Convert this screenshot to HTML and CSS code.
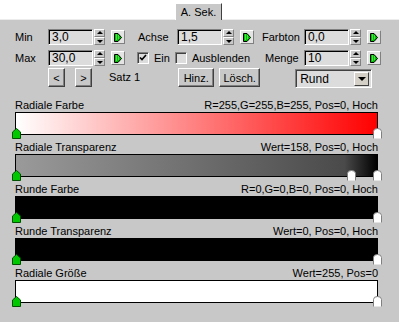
FILE: index.html
```html
<!DOCTYPE html>
<html lang="de">
<head>
    <meta charset="UTF-8">
    <title>A. Sek.</title>
    <link rel="stylesheet" href="styles.css">
</head>
<body>
    <div class="tabbar">
        <div class="tab">A. Sek.</div>
    </div>
    <div class="panel">
        <div class="row">
            <div class="grp">
                <span class="lbl w33">Min</span>
                <div class="field">3,0</div>
                <div class="spin"><b class="up"></b><b class="dn"></b></div>
                <div class="key"><svg width="8" height="9" viewBox="0 0 8 9"><polygon points="0.5,0.5 4,0.5 7.5,4.5 4,8.5 0.5,8.5" fill="#00c000" stroke="#000"/><path d="M2 2h1M4 3h1M2 4h1M4 5h1M2 6h1" stroke="#9f9" stroke-width="1"/></svg></div>
            </div>
            <div class="grp g2">
                <span class="lbl w39">Achse</span>
                <div class="field">1,5</div>
                <div class="spin"><b class="up"></b><b class="dn"></b></div>
                <div class="key"><svg width="8" height="9" viewBox="0 0 8 9"><polygon points="0.5,0.5 4,0.5 7.5,4.5 4,8.5 0.5,8.5" fill="#00c000" stroke="#000"/><path d="M2 2h1M4 3h1M2 4h1M4 5h1M2 6h1" stroke="#9f9" stroke-width="1"/></svg></div>
            </div>
            <div class="grp g3">
                <span class="lbl w42">Farbton</span>
                <div class="field">0,0</div>
                <div class="spin"><b class="up"></b><b class="dn"></b></div>
                <div class="key"><svg width="8" height="9" viewBox="0 0 8 9"><polygon points="0.5,0.5 4,0.5 7.5,4.5 4,8.5 0.5,8.5" fill="#00c000" stroke="#000"/><path d="M2 2h1M4 3h1M2 4h1M4 5h1M2 6h1" stroke="#9f9" stroke-width="1"/></svg></div>
            </div>
        </div>
        <div class="row">
            <div class="grp">
                <span class="lbl w33">Max</span>
                <div class="field">30,0</div>
                <div class="spin"><b class="up"></b><b class="dn"></b></div>
                <div class="key"><svg width="8" height="9" viewBox="0 0 8 9"><polygon points="0.5,0.5 4,0.5 7.5,4.5 4,8.5 0.5,8.5" fill="#00c000" stroke="#000"/><path d="M2 2h1M4 3h1M2 4h1M4 5h1M2 6h1" stroke="#9f9" stroke-width="1"/></svg></div>
            </div>
            <label class="check c1"><span class="box"><svg width="8" height="8" viewBox="0 0 8 8"><path d="M1 3.5l2 2 4-4.5" fill="none" stroke="#000" stroke-width="1.6"/></svg></span>Ein</label>
            <label class="check c2"><span class="box"></span>Ausblenden</label>
            <div class="grp g3">
                <span class="lbl w42 pad3">Menge</span>
                <div class="field">10</div>
                <div class="spin"><b class="up"></b><b class="dn"></b></div>
                <div class="key"><svg width="8" height="9" viewBox="0 0 8 9"><polygon points="0.5,0.5 4,0.5 7.5,4.5 4,8.5 0.5,8.5" fill="#00c000" stroke="#000"/><path d="M2 2h1M4 3h1M2 4h1M4 5h1M2 6h1" stroke="#9f9" stroke-width="1"/></svg></div>
            </div>
        </div>
        <div class="row r3">
            <button class="btn nav first">&lt;</button>
            <button class="btn nav">&gt;</button>
            <span class="satz">Satz 1</span>
            <button class="btn hinz">Hinz.</button>
            <button class="btn losch">Lösch.</button>
            <div class="combo"><span>Rund</span><i class="drop"></i></div>
        </div>

        <div class="sec first">
            <div class="head"><span>Radiale Farbe</span><span>R=255,G=255,B=255, Pos=0, Hoch</span></div>
            <div class="bar grad-red">
                <svg class="mk start" width="9" height="11" viewBox="0 0 9 11"><polygon points="0.5,10.5 0.5,4 4.5,0.5 8.5,4 8.5,10.5" fill="#00c800" stroke="#005000"/></svg>
                <svg class="mk end" width="9" height="11" viewBox="0 0 9 11"><path d="M0.5 10.5V3.5Q0.5 0.5 4.5 0.5Q8.5 0.5 8.5 3.5V10.5" fill="#fff" stroke="#808080"/></svg>
            </div>
        </div>
        <div class="sec">
            <div class="head"><span>Radiale Transparenz</span><span>Wert=158, Pos=0, Hoch</span></div>
            <div class="bar grad-gray">
                <svg class="mk start" width="9" height="11" viewBox="0 0 9 11"><polygon points="0.5,10.5 0.5,4 4.5,0.5 8.5,4 8.5,10.5" fill="#00c800" stroke="#005000"/></svg>
                <svg class="mk mid" width="9" height="11" viewBox="0 0 9 11"><path d="M0.5 10.5V3.5Q0.5 0.5 4.5 0.5Q8.5 0.5 8.5 3.5V10.5" fill="#fff" stroke="#808080"/></svg>
                <svg class="mk end" width="9" height="11" viewBox="0 0 9 11"><path d="M0.5 10.5V3.5Q0.5 0.5 4.5 0.5Q8.5 0.5 8.5 3.5V10.5" fill="#fff" stroke="#808080"/></svg>
            </div>
        </div>
        <div class="sec">
            <div class="head"><span>Runde Farbe</span><span>R=0,G=0,B=0, Pos=0, Hoch</span></div>
            <div class="bar black">
                <svg class="mk start" width="9" height="11" viewBox="0 0 9 11"><polygon points="0.5,10.5 0.5,4 4.5,0.5 8.5,4 8.5,10.5" fill="#00c800" stroke="#005000"/></svg>
                <svg class="mk end" width="9" height="11" viewBox="0 0 9 11"><path d="M0.5 10.5V3.5Q0.5 0.5 4.5 0.5Q8.5 0.5 8.5 3.5V10.5" fill="#fff" stroke="#808080"/></svg>
            </div>
        </div>
        <div class="sec">
            <div class="head"><span>Runde Transparenz</span><span>Wert=0, Pos=0, Hoch</span></div>
            <div class="bar black">
                <svg class="mk start" width="9" height="11" viewBox="0 0 9 11"><polygon points="0.5,10.5 0.5,4 4.5,0.5 8.5,4 8.5,10.5" fill="#00c800" stroke="#005000"/></svg>
                <svg class="mk end" width="9" height="11" viewBox="0 0 9 11"><path d="M0.5 10.5V3.5Q0.5 0.5 4.5 0.5Q8.5 0.5 8.5 3.5V10.5" fill="#fff" stroke="#808080"/></svg>
            </div>
        </div>
        <div class="sec">
            <div class="head"><span>Radiale Größe</span><span>Wert=255, Pos=0</span></div>
            <div class="bar plain">
                <svg class="mk start" width="9" height="11" viewBox="0 0 9 11"><polygon points="0.5,10.5 0.5,4 4.5,0.5 8.5,4 8.5,10.5" fill="#00c800" stroke="#005000"/></svg>
                <svg class="mk end" width="9" height="11" viewBox="0 0 9 11"><path d="M0.5 10.5V3.5Q0.5 0.5 4.5 0.5Q8.5 0.5 8.5 3.5V10.5" fill="#fff" stroke="#808080"/></svg>
            </div>
        </div>
    </div>
</body>
</html>
```

FILE: styles.css
```css
body {
    margin: 0;
    width: 399px;
    height: 322px;
    overflow: hidden;
    background-color: #fff;
    font-family: "Liberation Sans", Arial, sans-serif;
    font-size: 11px;
    color: #000;
}
.tabbar {
    height: 19px;
    display: flex;
    align-items: flex-end;
}
.tab {
    margin-left: 175px;
    margin-bottom: -1px;
    width: 47px;
    height: 17px;
    box-sizing: border-box;
    border: 1px solid;
    border-color: #fff #404040 transparent #fff;
    border-bottom: none;
    background-color: #c8c8c8;
    text-align: center;
    line-height: 16px;
    position: relative;
    z-index: 1;
}
.panel {
    background-color: #c8c8c8;
    border-top: 1px solid #ececec;
    height: 302px;
    padding: 9px 18px 0 15px;
}
.row {
    display: flex;
    align-items: center;
    height: 16px;
    margin-bottom: 5px;
}
.row.r3 {
    height: 20px;
    margin-top: -3px;
    margin-bottom: 0;
    align-items: flex-start;
}
.grp {
    display: flex;
    align-items: center;
}
.g2 {
    margin-left: 13px;
}
.g3 {
    margin-left: auto;
}
.lbl {
    display: inline-block;
}
.w33 { width: 33px; }
.w39 { width: 39px; }
.w42 { width: 42px; }
.pad3 { padding-left: 3px; width: 39px; }
.field {
    width: 45px;
    height: 16px;
    box-sizing: border-box;
    border: 1px solid;
    border-color: #808080 #fff #fff #808080;
    box-shadow: inset 1px 1px 0 #000;
    background-color: #dcdcdc;
    padding-left: 3px;
    line-height: 15px;
    font-size: 12px;
}
.spin {
    width: 11px;
    height: 16px;
    margin-left: 1px;
    display: flex;
    flex-direction: column;
}
.spin b {
    flex: 1;
    box-sizing: border-box;
    border: 1px solid;
    border-color: #fff #808080 #808080 #fff;
    background-color: #c8c8c8;
    position: relative;
}
.spin b::after {
    content: "";
    position: absolute;
    left: 2px;
    top: 1px;
    border-left: 3px solid transparent;
    border-right: 3px solid transparent;
}
.spin .up::after {
    border-bottom: 3px solid #000;
}
.spin .dn::after {
    border-top: 3px solid #000;
    top: 2px;
}
.key {
    width: 14px;
    height: 14px;
    margin-left: 6px;
    box-sizing: border-box;
    border: 1px solid;
    border-color: #fff #808080 #808080 #fff;
    background-color: #e4e4e4;
    display: flex;
    align-items: center;
    justify-content: center;
}
.key svg {
    display: block;
}
.check {
    display: flex;
    align-items: center;
}
.check .box {
    width: 12px;
    height: 12px;
    box-sizing: border-box;
    border: 1px solid;
    border-color: #808080 #fff #fff #808080;
    box-shadow: inset 1px 1px 0 #404040;
    background-color: #dcdcdc;
    margin-right: 5px;
    display: flex;
    align-items: center;
    justify-content: center;
}
.c1 {
    margin-left: 12px;
}
.c2 {
    margin-left: 5px;
}
.btn {
    font-family: inherit;
    font-size: 11px;
    height: 19px;
    padding: 0;
    box-sizing: border-box;
    border: 1px solid;
    border-color: #fff #404040 #404040 #fff;
    box-shadow: inset -1px -1px 0 #808080;
    background-color: #c8c8c8;
    color: #000;
}
.nav {
    width: 17px;
    margin-left: 10px;
}
.nav.first {
    margin-left: 33px;
}
.satz {
    margin-left: 17px;
    line-height: 19px;
}
.hinz {
    width: 36px;
    margin-left: 38px;
}
.losch {
    width: 41px;
    margin-left: 5px;
}
.combo {
    margin-left: 35px;
    margin-top: 1px;
    width: 77px;
    height: 19px;
    box-sizing: border-box;
    border: 1px solid;
    border-color: #808080 #fff #fff #808080;
    box-shadow: inset 1px 1px 0 #404040;
    background-color: #dcdcdc;
    display: flex;
    align-items: center;
    justify-content: space-between;
    font-size: 12px;
    padding: 2px 2px 1px 4px;
}
.drop {
    width: 15px;
    height: 14px;
    box-sizing: border-box;
    border: 1px solid;
    border-color: #fff #404040 #404040 #fff;
    background-color: #d4d0c8;
    position: relative;
}
.drop::after {
    content: "";
    position: absolute;
    left: 3px;
    top: 4px;
    border-left: 4px solid transparent;
    border-right: 4px solid transparent;
    border-top: 4px solid #000;
}
.sec {
    width: 363px;
}
.sec.first {
    margin-top: 10px;
}
.head {
    display: flex;
    justify-content: space-between;
    height: 14px;
    line-height: 14px;
}
.bar {
    height: 23px;
    box-sizing: border-box;
    border: 1px solid #000;
    position: relative;
    margin-bottom: 5px;
}
.grad-red {
    background: linear-gradient(to right, #fff, #ff0000);
}
.grad-gray {
    background: linear-gradient(to right, #9a9a9a, #4a4a4a 91%, #000);
}
.black {
    background-color: #000;
}
.plain {
    background-color: #fff;
}
.mk {
    position: absolute;
    top: 15px;
    display: block;
}
.mk.start {
    left: -4px;
}
.mk.end {
    right: -5px;
}
.mk.mid {
    left: 331px;
}
```
